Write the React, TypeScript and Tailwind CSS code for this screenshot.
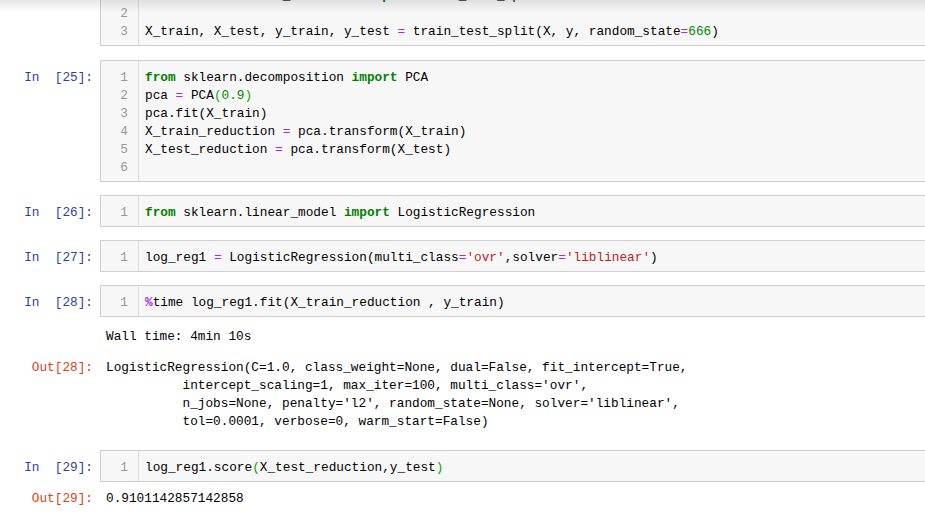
import type { ReactNode } from "react";

// token helpers
const K = ({ t }: { t: string }) => <span className="font-bold text-[#008000]">{t}</span>;
const Op = ({ t }: { t: string }) => <span className="text-[#aa22ff]">{t}</span>;
const N = ({ t }: { t: string }) => <span className="text-[#008800]">{t}</span>;
const S = ({ t }: { t: string }) => <span className="text-[#ba2121]">{t}</span>;
const B = ({ t }: { t: string }) => <span className="text-[#00aa00]">{t}</span>;

interface CellProps {
  prompt: string;
  lines: ReactNode[];
  className?: string;
}

function CodeCell({ prompt, lines, className = "" }: CellProps) {
  return (
    <div className={`flex ${className}`}>
      <div className="w-[100px] shrink-0 pt-[9px] pr-[7px] text-right leading-[18px] text-[#303f9f] whitespace-pre">
        {prompt}
      </div>
      <div className="flex w-[860px] shrink-0 border border-[#cfcfcf] bg-[#f7f7f7]">
        <div className="w-[38px] shrink-0 border-r border-[#dddddd] pt-[8px] pb-[4px] pr-[10px] text-right text-[#999999]">
          {lines.map((_, i) => (
            <div key={i} className="h-[18px] leading-[18px]">
              {i + 1}
            </div>
          ))}
        </div>
        <div className="pt-[8px] pb-[4px] pl-[6px] text-black">
          {lines.map((l, i) => (
            <div key={i} className="h-[18px] leading-[18px] whitespace-pre">
              {l}
            </div>
          ))}
        </div>
      </div>
    </div>
  );
}

function OutRow({ prompt, lines, className = "" }: { prompt?: string; lines: string[]; className?: string }) {
  return (
    <div className={`flex ${className}`}>
      <div className="w-[100px] shrink-0 pr-[7px] text-right leading-[18px] text-[#d84315]">{prompt}</div>
      <div className="pl-[6px] text-black">
        {lines.map((l, i) => (
          <div key={i} className="h-[18px] leading-[18px] whitespace-pre">
            {l}
          </div>
        ))}
      </div>
    </div>
  );
}

export default function App() {
  return (
    <div className="relative w-[925px] h-[522px] overflow-hidden bg-white text-[12.75px] font-['Liberation_Mono',monospace]">
      <CodeCell
        prompt=""
        className="mt-[-22px]"
        lines={[
          <>
            <K t="from" /> sklearn.model_selection <K t="import" /> train_test_split
          </>,
          <></>,
          <>
            X_train, X_test, y_train, y_test <Op t="=" /> train_test_split(X, y, random_state
            <Op t="=" />
            <N t="666" />)
          </>,
        ]}
      />

      <CodeCell
        prompt="In  [25]:"
        className="mt-[14px]"
        lines={[
          <>
            <K t="from" /> sklearn.decomposition <K t="import" /> PCA
          </>,
          <>
            pca <Op t="=" /> PCA
            <B t="(" />
            <N t="0.9" />
            <B t=")" />
          </>,
          <>pca.fit(X_train)</>,
          <>
            X_train_reduction <Op t="=" /> pca.transform(X_train)
          </>,
          <>
            X_test_reduction <Op t="=" /> pca.transform(X_test)
          </>,
          <></>,
        ]}
      />

      <CodeCell
        prompt="In  [26]:"
        className="mt-[13px]"
        lines={[
          <>
            <K t="from" /> sklearn.linear_model <K t="import" /> LogisticRegression
          </>,
        ]}
      />

      <CodeCell
        prompt="In  [27]:"
        className="mt-[13px]"
        lines={[
          <>
            log_reg1 <Op t="=" /> LogisticRegression(multi_class
            <Op t="=" />
            <S t="'ovr'" />,solver
            <Op t="=" />
            <S t="'liblinear'" />)
          </>,
        ]}
      />

      <CodeCell
        prompt="In  [28]:"
        className="mt-[13px]"
        lines={[
          <>
            <span className="font-bold text-[#aa22ff]">%</span>time log_reg1.fit(X_train_reduction , y_train)
          </>,
        ]}
      />

      <OutRow className="mt-[8px] pt-[3px]" lines={["Wall time: 4min 10s"]} />

      <OutRow
        className="mt-[11px] pt-[2px]"
        prompt="Out[28]:"
        lines={[
          "LogisticRegression(C=1.0, class_weight=None, dual=False, fit_intercept=True,",
          "          intercept_scaling=1, max_iter=100, multi_class='ovr',",
          "          n_jobs=None, penalty='l2', random_state=None, solver='liblinear',",
          "          tol=0.0001, verbose=0, warm_start=False)",
        ]}
      />

      <CodeCell
        prompt="In  [29]:"
        className="mt-[19px]"
        lines={[
          <>
            log_reg1.score
            <B t="(" />
            X_test_reduction,y_test
            <B t=")" />
          </>,
        ]}
      />

      <OutRow className="mt-[6px] pt-[2px]" prompt="Out[29]:" lines={["0.9101142857142858"]} />

      {/* header shadow at top of the notebook */}
      <div className="pointer-events-none absolute inset-x-0 top-0 h-[12px] bg-gradient-to-b from-black/10 to-transparent" />
    </div>
  );
}
